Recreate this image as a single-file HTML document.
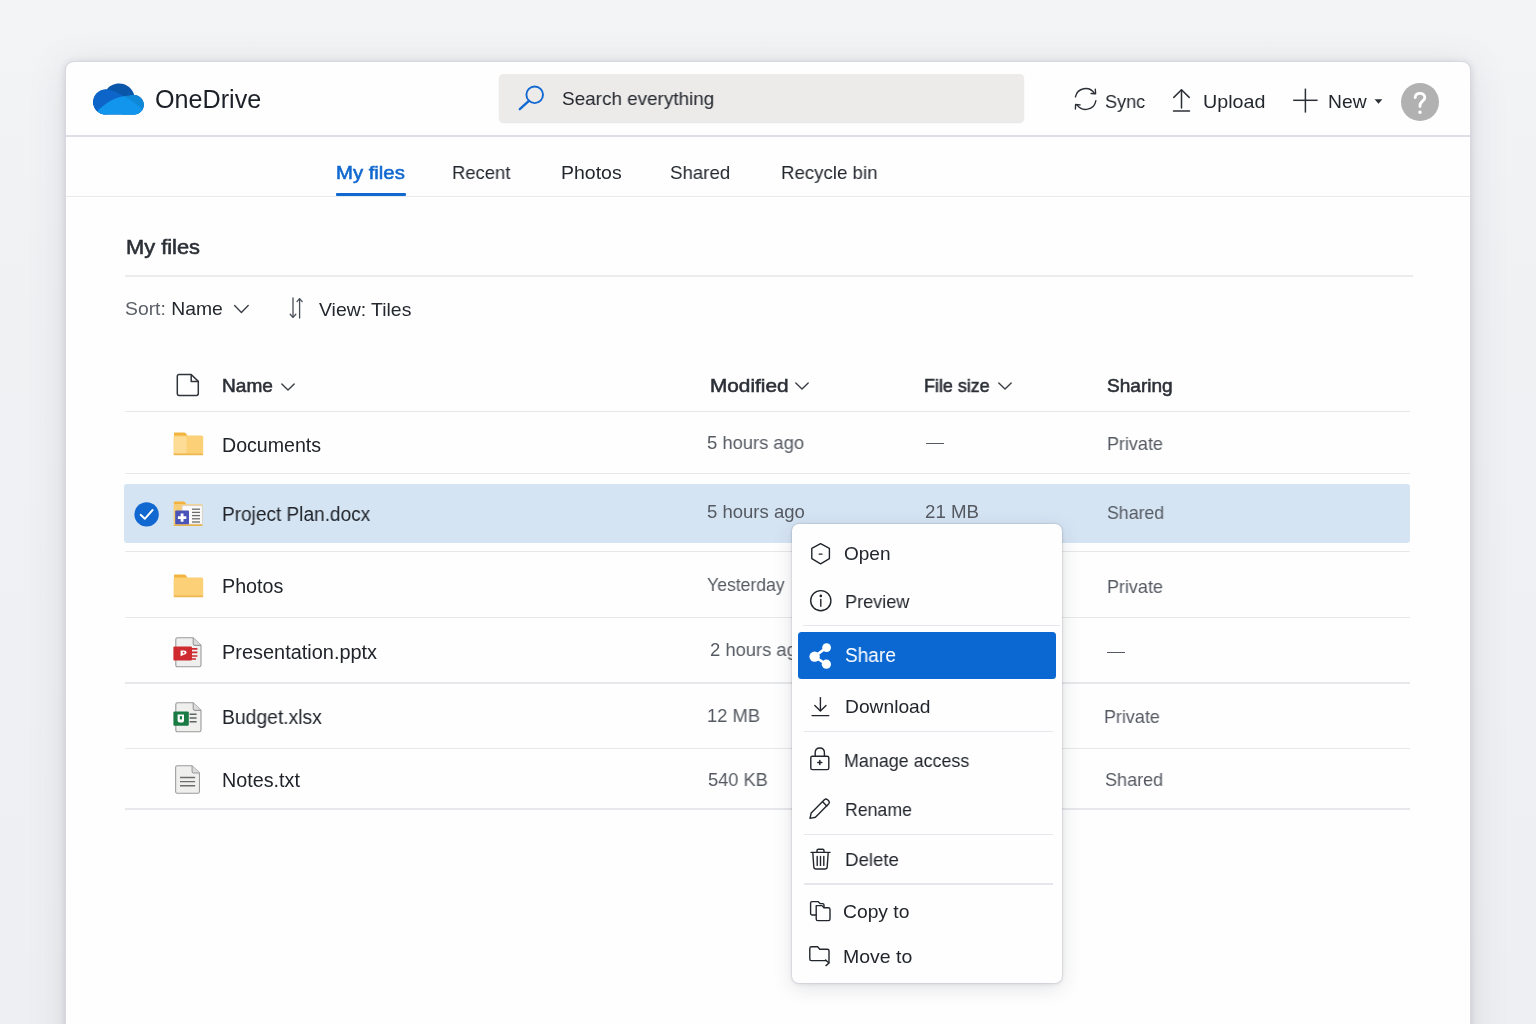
<!DOCTYPE html>
<html>
<head>
<meta charset="utf-8">
<title>OneDrive</title>
<style>
*{box-sizing:border-box;margin:0;padding:0}
html,body{width:1536px;height:1024px;overflow:hidden}
body{font-family:"Liberation Sans",sans-serif;color:#20242a;background:linear-gradient(180deg,#f3f4f5 0%,#f0f1f3 30%,#eeeff2 100%);position:relative}
.abs{position:absolute;white-space:nowrap}
svg{position:absolute;overflow:visible}
.win{position:absolute;left:65px;top:60.5px;width:1406px;height:1000px;background:#fefefe;border-radius:9px 9px 0 0;border:1px solid rgba(125,130,155,.30);box-shadow:0 6px 38px rgba(60,66,95,.13),0 1px 7px rgba(60,66,95,.16)}
.ln{position:absolute;height:2px;background:#e7e8eb}
.t{position:absolute;white-space:nowrap;line-height:1;transform-origin:0 50%;will-change:transform}
</style>
</head>
<body>
<div class="win"></div>
<div class="ln" style="left:66px;top:134.5px;width:1404px;height:2px;background:#dddee6"></div>
<svg style="left:92px;top:83px" width="53" height="32" viewBox="0 0 53 32">
  <defs><clipPath id="cl"><path d="M13.6 6.4 C14 6.4 14.4 6.4 14.8 6.5 C17.2 2.9 21.9 0.5 27.2 0.5 C34.4 0.5 40.5 5.4 42.2 12 C47.6 12.1 51.8 16.4 51.8 21.7 C51.8 27.1 47.5 31.4 42.1 31.4 H13.6 C6.7 31.4 1.1 25.8 1.1 18.9 C1.1 12 6.7 6.4 13.6 6.4 Z"/></clipPath></defs>
  <g clip-path="url(#cl)">
    <rect x="0" y="0" width="53" height="32" fill="#0a57a9"/>
    <circle cx="13.6" cy="18.9" r="12.7" fill="#0d65c9"/>
    <path d="M0 32 V19 L13 6.2 C20 6.6 26 9.6 31.4 13.2 L34 20 L12 32Z" fill="#0d65c9"/>
    <circle cx="42.1" cy="21.7" r="9.9" fill="#1088d8"/>
    <path d="M30 32 L31.6 13.2 L42 11.8 L53 20 V32Z" fill="#1088d8"/>
    <path d="M-2 36 C8 24 20 14.4 31.8 13.2 C39 16.4 46 22 53 29.5 V36 Z" fill="#1295ed"/>
  </g>
</svg>
<div class="t" id="brand" style="left:155.11px;top:87.34px;font-size:25px;color:#1b1f26;font-weight:400;transform:scaleX(1.0056);">OneDrive</div>
<div class="abs" style="left:499px;top:74px;width:524.5px;height:48.3px;background:#ecebea;border-radius:4.5px;box-shadow:0 1px 1.5px rgba(0,0,0,.10)"></div>
<svg style="left:517px;top:84px" width="30" height="30" viewBox="0 0 30 30">
  <circle cx="17.7" cy="10.8" r="8.3" fill="none" stroke="#1068d0" stroke-width="1.9"/>
  <path d="M11.9 16.8 L2.8 25.2" stroke="#1068d0" stroke-width="2.3" stroke-linecap="round"/>
</svg>
<div class="t" id="search" style="left:561.53px;top:89.22px;font-size:19px;color:#23272e;font-weight:400;transform:scaleX(0.9945);">Search everything</div>
<svg style="left:1073px;top:86px" width="26" height="26" viewBox="0 0 26 26" fill="none" stroke="#2b2f36" stroke-width="1.4" stroke-linecap="round" stroke-linejoin="round">
  <path d="M2.43 10.84 A10.4 10.4 0 0 1 21.42 7.49"/>
  <path d="M22.3 3.2 L22.6 7.8 L18.1 7.5"/>
  <path d="M22.84 14.81 A10.4 10.4 0 0 1 3.88 18.66"/>
  <path d="M2.4 23 L2.6 18.5 L7.1 18.9"/>
</svg>
<div class="t" id="sync" style="left:1105.0px;top:92.22px;font-size:19px;color:#23272e;font-weight:400;transform:scaleX(0.9500);">Sync</div>
<svg style="left:1171px;top:87px" width="22" height="26" viewBox="0 0 22 26" fill="none" stroke="#2b2f36" stroke-width="1.5" stroke-linecap="round" stroke-linejoin="round">
  <path d="M10.5 3 V21"/><path d="M2.8 10.4 L10.5 2.8 L18.2 10.4"/><path d="M2.5 24 H18.5"/>
</svg>
<div class="t" id="upload" style="left:1203.05px;top:92.22px;font-size:19px;color:#23272e;font-weight:400;transform:scaleX(1.0365);">Upload</div>
<svg style="left:1292px;top:87px" width="28" height="28" viewBox="0 0 28 28" fill="none" stroke="#2b2f36" stroke-width="1.5" stroke-linecap="butt">
  <path d="M13.4 1.6 V25.6"/><path d="M1.2 13.3 H25.6"/>
</svg>
<div class="t" id="new" style="left:1327.55px;top:92.42px;font-size:19px;color:#23272e;font-weight:400;transform:scaleX(1.0143);">New</div>
<svg style="left:1374px;top:99px" width="9" height="6" viewBox="0 0 9 6"><path d="M0.6 0.3 H8.4 L4.5 4.8 Z" fill="#2b2f36"/></svg>
<div class="abs" style="left:1401px;top:82.5px;width:38px;height:38px;border-radius:50%;background:#b1b1b1"></div>
<svg style="left:1401px;top:82.5px" width="38" height="38" viewBox="0 0 38 38" fill="none" stroke="#fff" stroke-width="2.9" stroke-linecap="round" stroke-linejoin="round">
  <path d="M14.2 14.6 C14.2 11.6 16.4 10.4 19 10.4 C21.8 10.4 23.8 12 23.8 14.4 C23.8 18 19 18.4 19 22.4 V23.6"/>
  <circle cx="19" cy="29.3" r="1.1" fill="#fff" stroke-width="1.4"/>
</svg>
<div class="t" id="nav1" style="left:335.88px;top:163.96px;font-size:18.6px;color:#1068d0;font-weight:400;-webkit-text-stroke:0.55px #1068d0;transform:scaleX(1.0914);">My files</div>
<div class="abs" style="left:335.5px;top:193px;width:70px;height:3.2px;background:#1068d0;border-radius:1px"></div>
<div class="t" id="nav2" style="left:452.09px;top:163.12px;font-size:19px;color:#23272e;font-weight:400;transform:scaleX(0.9704);">Recent</div>
<div class="t" id="nav3" style="left:560.64px;top:163.12px;font-size:19px;color:#23272e;font-weight:400;transform:scaleX(1.0253);">Photos</div>
<div class="t" id="nav4" style="left:670.15px;top:163.12px;font-size:19px;color:#23272e;font-weight:400;transform:scaleX(0.9820);">Shared</div>
<div class="t" id="nav5" style="left:781.38px;top:163.12px;font-size:19px;color:#23272e;font-weight:400;transform:scaleX(0.9823);">Recycle bin</div>
<div class="ln" style="left:66px;top:195.5px;width:1404px;height:1.5px;background:#e8e9ed"></div>
<div class="t" id="h1" style="left:126.0px;top:238.31px;font-size:19.6px;color:#2b2f36;font-weight:400;-webkit-text-stroke:0.55px #2b2f36;transform:scaleX(1.1130);">My files</div>
<div class="ln" style="left:125px;top:275.3px;width:1288px;height:1.5px;background:#ebecee"></div>
<div class="t" id="sort" style="left:125.09px;top:299.22px;font-size:19px;color:#23272e;font-weight:400;transform:scaleX(1.0174);"><span style="color:#5b6068">Sort:</span> Name</div>
<svg style="left:233px;top:303px" width="17" height="12" viewBox="0 0 17 12" fill="none" stroke="#3a3f46" stroke-width="1.4" stroke-linecap="round" stroke-linejoin="round"><path d="M1.6 2.6 L8.4 9.4 L15.2 2.6"/></svg>
<svg style="left:288px;top:296px" width="18" height="24" viewBox="0 0 18 24" fill="none" stroke="#4a4f57" stroke-width="1.3" stroke-linecap="round" stroke-linejoin="round">
  <path d="M5 2 V21"/><path d="M2.2 18.2 L5 21.4 L7.8 18.2"/>
  <path d="M11.6 22 V3"/><path d="M9 5.6 L11.6 2.6 L14.2 5.6"/>
</svg>
<div class="t" id="view" style="left:319.4px;top:299.72px;font-size:19px;color:#23272e;font-weight:400;transform:scaleX(1.0207);">View: Tiles</div>
<svg style="left:176px;top:373px" width="24" height="24" viewBox="0 0 24 24" fill="none" stroke="#30343b" stroke-width="1.5" stroke-linejoin="round">
  <path d="M3 1.5 H15.2 L22.3 8.4 V20.5 Q22.3 22.4 20.4 22.4 H3 Q1.3 22.4 1.3 20.6 V3.2 Q1.3 1.5 3 1.5 Z"/><path d="M15.2 1.5 V8.4 H22.3"/>
</svg>
<div class="t" id="cname" style="left:221.9px;top:377.14px;font-size:18.5px;color:#2b2f36;font-weight:400;-webkit-text-stroke:0.55px #2b2f36;transform:scaleX(1.0312);">Name</div>
<svg style="left:280.5px;top:382.5px" width="14" height="8" viewBox="0 0 14 8" fill="none" stroke="#3a3f46" stroke-width="1.4" stroke-linecap="round" stroke-linejoin="round"><path d="M0.8 0.9 L7.0 7 L13.2 0.9"/></svg>
<div class="t" id="cmod" style="left:710.09px;top:376.22px;font-size:19px;color:#2b2f36;font-weight:400;-webkit-text-stroke:0.55px #2b2f36;transform:scaleX(1.0934);">Modified</div>
<svg style="left:795px;top:382px" width="14" height="8" viewBox="0 0 14 8" fill="none" stroke="#3a3f46" stroke-width="1.4" stroke-linecap="round" stroke-linejoin="round"><path d="M0.8 0.9 L7.0 7 L13.2 0.9"/></svg>
<div class="t" id="csize" style="left:924.03px;top:376.64px;font-size:18.5px;color:#2b2f36;font-weight:400;-webkit-text-stroke:0.55px #2b2f36;transform:scaleX(0.9673);">File size</div>
<svg style="left:998px;top:382px" width="14" height="8" viewBox="0 0 14 8" fill="none" stroke="#3a3f46" stroke-width="1.4" stroke-linecap="round" stroke-linejoin="round"><path d="M0.8 0.9 L7.0 7 L13.2 0.9"/></svg>
<div class="t" id="cshare" style="left:1106.82px;top:377.14px;font-size:18.5px;color:#2b2f36;font-weight:400;-webkit-text-stroke:0.55px #2b2f36;transform:scaleX(1.0295);">Sharing</div>
<div class="ln" style="left:125px;top:410.6px;width:1285px;height:1.6px;background:#e6e7ea"></div>
<div class="ln" style="left:125px;top:472.5px;width:1285px;height:1.6px;background:#e7e8eb"></div>
<div class="ln" style="left:125px;top:550.8px;width:1285px;height:1.6px;background:#e7e8eb"></div>
<div class="ln" style="left:125px;top:616.5px;width:1285px;height:1.6px;background:#e7e8eb"></div>
<div class="ln" style="left:125px;top:682.3px;width:1285px;height:1.6px;background:#e7e8eb"></div>
<div class="ln" style="left:125px;top:747.8px;width:1285px;height:1.6px;background:#e7e8eb"></div>
<div class="ln" style="left:125px;top:808.2px;width:1285px;height:1.6px;background:#e7e8eb"></div>
<div class="abs" style="left:124px;top:484px;width:1286px;height:58.6px;background:#d5e4f3;border-radius:3px"></div>
<svg style="left:172.5px;top:432px" width="31" height="24" viewBox="0 0 31 24">
  <path d="M1.5 0.5 H11 Q12.3 0.5 13 1.6 L14.6 4 H1 V1 Q1 .5 1.5 .5Z" fill="#f2b33f"/>
  <rect x="0.6" y="3.6" width="29.6" height="19.4" rx="1.6" fill="#fbd076"/><rect x="1.2" y="4.4" width="12.4" height="17" rx="1" fill="#fde0a0" opacity=".75"/>
  <rect x="0.6" y="21.6" width="29.6" height="1.6" rx=".8" fill="#eeb64e"/>
</svg>
<div class="t" id="r1" style="left:222.13px;top:435.79px;font-size:19.5px;color:#20242a;font-weight:400;transform:scaleX(1.0050);">Documents</div>
<div class="t" id="r1m" style="left:707.41px;top:434.34px;font-size:18.5px;color:#555a62;font-weight:400;transform:scaleX(0.9933);">5 hours ago</div>
<div class="abs" style="left:926px;top:442.6px;width:17.5px;height:1.6px;background:#555a62"></div>
<div class="t" id="r1s" style="left:1107.04px;top:434.64px;font-size:18.5px;color:#555a62;font-weight:400;transform:scaleX(0.9712);">Private</div>
<svg style="left:134px;top:502px" width="25" height="25" viewBox="0 0 25 25"><circle cx="12.6" cy="12.4" r="12.2" fill="#1068d0"/><path d="M6.6 12.8 L10.8 16.8 L18.6 8" fill="none" stroke="#fff" stroke-width="1.9" stroke-linecap="round" stroke-linejoin="round"/></svg>
<svg style="left:172.5px;top:501px" width="31" height="26" viewBox="0 0 31 26">
  <path d="M1.2 0.6 H10.4 Q11.6 .6 12.2 1.6 L13.4 3.6 H.8 V1 Q.8 .6 1.2 .6Z" fill="#f2b33f"/>
  <rect x="0.6" y="3.2" width="29" height="20.8" rx="1.4" fill="#f7cd78"/>
  <rect x="9" y="4.6" width="20.4" height="18.6" rx="1" fill="#fafafa" stroke="#c9c9c9" stroke-width=".6"/>
  <g stroke="#6b6b6b" stroke-width="1.3"><path d="M19 8.2H27"/><path d="M19 11.4H27"/><path d="M19 14.6H27"/><path d="M19 17.8H27"/><path d="M19 21H27"/></g>
  <rect x="2.2" y="9.6" width="13.8" height="14" rx=".8" fill="#4953b8"/>
  <path d="M9.1 12.4 V20.8 M4.9 16.6 H13.3" stroke="#fff" stroke-width="2.8"/>
  <rect x="0.6" y="23.6" width="29" height="1.4" rx=".7" fill="#e7b24c"/>
</svg>
<div class="t" id="r2" style="left:222.17px;top:505.19px;font-size:19.5px;color:#20242a;font-weight:400;transform:scaleX(0.9765);">Project Plan.docx</div>
<div class="t" id="r2m" style="left:706.57px;top:502.64px;font-size:18.5px;color:#555a62;font-weight:400;transform:scaleX(1.0013);">5 hours ago</div>
<div class="t" id="r2z" style="left:924.6px;top:502.64px;font-size:18.5px;color:#555a62;font-weight:400;transform:scaleX(1.0093);">21 MB</div>
<div class="t" id="r2s" style="left:1106.53px;top:504.34px;font-size:18.5px;color:#555a62;font-weight:400;transform:scaleX(0.9584);">Shared</div>
<svg style="left:172.5px;top:573.5px" width="31" height="24" viewBox="0 0 31 24">
  <path d="M1.5 0.5 H11 Q12.3 0.5 13 1.6 L14.6 4 H1 V1 Q1 .5 1.5 .5Z" fill="#f2b33f"/>
  <rect x="0.6" y="3.6" width="29.6" height="19.4" rx="1.6" fill="#fbd076"/>
  <rect x="0.6" y="21.6" width="29.6" height="1.6" rx=".8" fill="#eeb64e"/>
</svg>
<div class="t" id="r3" style="left:222.1px;top:576.79px;font-size:19.5px;color:#20242a;font-weight:400;transform:scaleX(1.0103);">Photos</div>
<div class="t" id="r3m" style="left:707.31px;top:576.34px;font-size:18.5px;color:#555a62;font-weight:400;transform:scaleX(0.9523);">Yesterday</div>
<div class="t" id="r3s" style="left:1107.04px;top:577.64px;font-size:18.5px;color:#555a62;font-weight:400;transform:scaleX(0.9712);">Private</div>
<svg style="left:173.2px;top:636.5px" width="30.00" height="31.00" viewBox="0 0 30 31"><path d="M4.4 .8 H20.2 L28 8.4 V28 Q28 29.8 26.2 29.8 H4.4 Q2.8 29.8 2.8 28 V2.6 Q2.8 .8 4.4 .8Z" fill="#efefee" stroke="#9a9a9a" stroke-width="1.1" stroke-linejoin="round"/><path d="M20.2 .8 V6.8 Q20.2 8.4 21.8 8.4 H28" fill="#dcdcdc" stroke="#9a9a9a" stroke-width="1.1" stroke-linejoin="round"/><rect x="0.4" y="9.4" width="18.6" height="14" rx="1.2" fill="#cf2a2f"/><path d="M19 11.8H24.4 M19 15.4H24.4 M19 19H24.4 M19 22H23" stroke="#cf2a2f" stroke-width="1.7"/><path d="M7.6 13.6 H10.8 Q13.6 13.6 13.6 15.6 Q13.6 17.6 10.8 17.8 L7.6 19.2Z" fill="#fff"/><circle cx="10.6" cy="15.7" r=".9" fill="#cf2a2f"/></svg>
<div class="t" id="r4" style="left:222.07px;top:642.79px;font-size:19.5px;color:#20242a;font-weight:400;transform:scaleX(1.0219);">Presentation.pptx</div>
<div class="t" id="r4m" style="left:709.81px;top:640.74px;font-size:18.5px;color:#555a62;font-weight:400;transform:scaleX(0.9933);">2 hours ago</div>
<div class="abs" style="left:1107px;top:651.6px;width:17.5px;height:1.6px;background:#555a62"></div>
<svg style="left:173.2px;top:701.5px" width="30.00" height="31.00" viewBox="0 0 30 31"><path d="M4.4 .8 H20.2 L28 8.4 V28 Q28 29.8 26.2 29.8 H4.4 Q2.8 29.8 2.8 28 V2.6 Q2.8 .8 4.4 .8Z" fill="#efefee" stroke="#9a9a9a" stroke-width="1.1" stroke-linejoin="round"/><path d="M20.2 .8 V6.8 Q20.2 8.4 21.8 8.4 H28" fill="#dcdcdc" stroke="#9a9a9a" stroke-width="1.1" stroke-linejoin="round"/><rect x="0.4" y="9.4" width="15.4" height="14.4" rx="1.2" fill="#1a7a43"/><path d="M16.6 12.2H23.6 M16.6 16H23.6 M16.6 19.8H23.6" stroke="#5f6662" stroke-width="1.5"/><path d="M4.6 12.4 H11 V18.4 Q11 20.6 8.8 20.6 H6.6 Q4.6 20.6 4.6 18.6Z" fill="#fff"/><rect x="6.8" y="14.2" width="2.2" height="3.2" fill="#1a7a43"/></svg>
<div class="t" id="r5" style="left:222.17px;top:708.29px;font-size:19.5px;color:#20242a;font-weight:400;transform:scaleX(0.9907);">Budget.xlsx</div>
<div class="t" id="r5m" style="left:707.24px;top:707.34px;font-size:18.5px;color:#555a62;font-weight:400;transform:scaleX(0.9895);">12 MB</div>
<div class="t" id="r5s" style="left:1103.86px;top:708.34px;font-size:18.5px;color:#555a62;font-weight:400;transform:scaleX(0.9699);">Private</div>
<svg style="left:173.4px;top:765.4px" width="28.35" height="29.29" viewBox="0 0 30 31"><path d="M4.4 .8 H20.2 L28 8.4 V28 Q28 29.8 26.2 29.8 H4.4 Q2.8 29.8 2.8 28 V2.6 Q2.8 .8 4.4 .8Z" fill="#efefee" stroke="#9a9a9a" stroke-width="1.1" stroke-linejoin="round"/><path d="M20.2 .8 V6.8 Q20.2 8.4 21.8 8.4 H28" fill="#dcdcdc" stroke="#9a9a9a" stroke-width="1.1" stroke-linejoin="round"/><path d="M7.4 13.2H23.4 M7.4 17.6H23.4 M7.4 22H23.4" stroke="#6d6d6d" stroke-width="1.5"/></svg>
<div class="t" id="r6" style="left:222.1px;top:771.19px;font-size:19.5px;color:#20242a;font-weight:400;transform:scaleX(1.0120);">Notes.txt</div>
<div class="t" id="r6m" style="left:707.52px;top:770.64px;font-size:18.5px;color:#555a62;font-weight:400;transform:scaleX(0.9869);">540 KB</div>
<div class="t" id="r6s" style="left:1104.71px;top:771.14px;font-size:18.5px;color:#555a62;font-weight:400;transform:scaleX(0.9750);">Shared</div>
<div class="abs" style="left:792px;top:524px;width:270px;height:459.4px;background:#fefefe;border-radius:6.5px;box-shadow:0 5px 20px rgba(40,44,70,.13),0 1px 5px rgba(40,44,70,.10),0 0 1.5px rgba(40,44,70,.35)"></div>
<div class="ln" style="left:803px;top:625px;width:257px;height:1.3px;background:#e6e7ec"></div>
<div class="ln" style="left:804px;top:731px;width:249px;height:1.3px;background:#e6e7ec"></div>
<div class="ln" style="left:804px;top:833.6px;width:249px;height:1.3px;background:#e6e7ec"></div>
<div class="ln" style="left:804px;top:883.4px;width:249px;height:1.3px;background:#e6e7ec"></div>
<div class="abs" style="left:798px;top:632px;width:258px;height:47px;background:#0b68d2;border-radius:3.5px"></div>
<svg style="left:809px;top:542px" width="24" height="24" viewBox="0 0 24 24" fill="none" stroke="#22262c" stroke-width="1.4" stroke-linecap="round" stroke-linejoin="round"><path d="M11.6 1.6 L20.4 6.4 V16.6 L11.6 21.8 L2.8 16.6 V6.4 Z"/><path d="M10.2 12.2 H13" stroke-width="1.3"/></svg>
<div class="t" id="m1" style="left:843.9px;top:543.62px;font-size:19px;color:#22262c;font-weight:400;transform:scaleX(0.9951);">Open</div>
<svg style="left:809px;top:589px" width="24" height="24" viewBox="0 0 24 24" fill="none" stroke="#22262c" stroke-width="1.4" stroke-linecap="round" stroke-linejoin="round"><circle cx="11.8" cy="11.7" r="10.1"/><path d="M11.8 10.4 V17.2"/><circle cx="11.8" cy="6.9" r=".6" fill="#22262c"/></svg>
<div class="t" id="m2" style="left:845.09px;top:591.92px;font-size:19px;color:#22262c;font-weight:400;transform:scaleX(0.9536);">Preview</div>
<svg style="left:808px;top:642px" width="26" height="28" viewBox="0 0 26 28"><g stroke="#fff" stroke-width="2.6" stroke-linecap="round"><path d="M6.4 14.6 L18.4 5.6"/><path d="M6.4 14.6 L18.2 22.2"/></g><circle cx="6.6" cy="14.6" r="5.2" fill="#fff"/><circle cx="18.6" cy="5.6" r="4.4" fill="#fff"/><circle cx="18.4" cy="22.2" r="4.6" fill="#fff"/></svg>
<div class="t" id="m3" style="left:844.69px;top:646.49px;font-size:19.5px;color:#fff;font-weight:400;transform:scaleX(0.9770);">Share</div>
<svg style="left:809px;top:696px" width="24" height="22" viewBox="0 0 24 22" fill="none" stroke="#22262c" stroke-width="1.4" stroke-linecap="round" stroke-linejoin="round"><path d="M11.4 1.6 V14.6"/><path d="M5.8 9.6 L11.4 15 L17 9.6"/><path d="M3 19.6 H19.8"/></svg>
<div class="t" id="m4" style="left:844.59px;top:696.72px;font-size:19px;color:#22262c;font-weight:400;transform:scaleX(1.0120);">Download</div>
<svg style="left:809px;top:746px" width="22" height="26" viewBox="0 0 22 26" fill="none" stroke="#22262c" stroke-width="1.4" stroke-linecap="round" stroke-linejoin="round"><rect x="1.8" y="10.2" width="18" height="13.4" rx="1.6"/><path d="M6.2 10 V6.8 Q6.2 2 10.8 2 Q15.4 2 15.4 6.8 V10"/><path d="M10.8 14.6 V18.6 M8.8 16.6 H12.8" stroke-width="1.5"/></svg>
<div class="t" id="m5" style="left:843.5px;top:750.72px;font-size:19px;color:#22262c;font-weight:400;transform:scaleX(0.9419);">Manage access</div>
<svg style="left:808px;top:797px" width="24" height="24" viewBox="0 0 24 24" fill="none" stroke="#22262c" stroke-width="1.4" stroke-linecap="round" stroke-linejoin="round"><path d="M16.6 2.6 Q18 1.4 19.6 2.8 L20.8 4 Q22 5.4 20.8 6.8 L7.4 20.2 L2 21.4 L3.2 16 Z"/><path d="M14.6 4.8 L18.8 9"/></svg>
<div class="t" id="m6" style="left:845.11px;top:799.72px;font-size:19px;color:#22262c;font-weight:400;transform:scaleX(0.9317);">Rename</div>
<svg style="left:809px;top:847px" width="24" height="24" viewBox="0 0 24 24" fill="none" stroke="#22262c" stroke-width="1.4" stroke-linecap="round" stroke-linejoin="round"><path d="M2 5.4 H21"/><path d="M8 5.2 V3.6 Q8 2.2 9.4 2.2 H13.6 Q15 2.2 15 3.6 V5.2"/><path d="M3.8 5.6 L4.8 20 Q5 22 7 22 H16 Q18 22 18.2 20 L19.2 5.6"/><path d="M8.2 9.4 V18.4 M11.5 9.4 V18.4 M14.8 9.4 V18.4"/></svg>
<div class="t" id="m7" style="left:844.98px;top:850.32px;font-size:19px;color:#22262c;font-weight:400;transform:scaleX(0.9832);">Delete</div>
<svg style="left:809px;top:900px" width="24" height="22" viewBox="0 0 24 22" fill="none" stroke="#22262c" stroke-width="1.4" stroke-linecap="round" stroke-linejoin="round"><path d="M7.2 5.6 H13 L15 7.8 H19.4 Q21 7.8 21 9.4 V19 Q21 20.6 19.4 20.6 H8.8 Q7.2 20.6 7.2 19 Z"/><path d="M7 15 H3 Q1.6 15 1.6 13.6 V3 Q1.6 1.6 3 1.6 H9 L11 3.6 H13.6 Q15 3.6 15 5 V7.6"/></svg>
<div class="t" id="m8" style="left:843.38px;top:901.92px;font-size:19px;color:#22262c;font-weight:400;transform:scaleX(1.0143);">Copy to</div>
<svg style="left:808px;top:945px" width="24" height="22" viewBox="0 0 24 22" fill="none" stroke="#22262c" stroke-width="1.4" stroke-linecap="round" stroke-linejoin="round"><path d="M18 15.6 H3.4 Q1.8 15.6 1.8 14 V3.4 Q1.8 1.8 3.4 1.8 H9.6 L11.8 4.2 H19.4 Q21 4.2 21 5.8 V17.6"/><path d="M17.6 15 L21 18 L18 20.6"/></svg>
<div class="t" id="m9" style="left:843.12px;top:947.22px;font-size:19px;color:#22262c;font-weight:400;transform:scaleX(1.0258);">Move to</div>
</body>
</html>
